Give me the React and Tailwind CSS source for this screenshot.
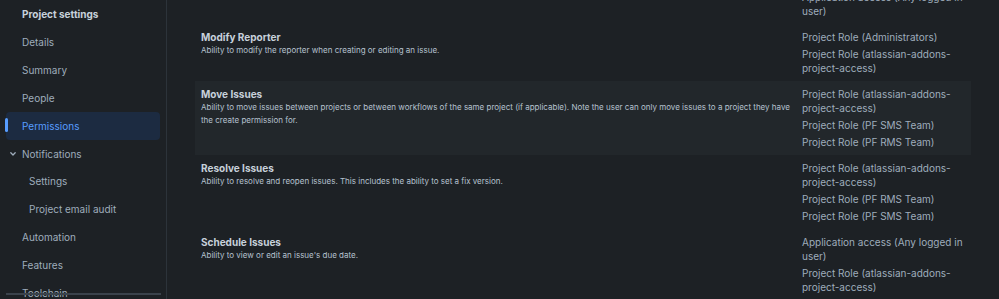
import React from 'react'

const nav = [
  { label: 'Details' },
  { label: 'Summary' },
  { label: 'People' },
  { label: 'Permissions', active: true },
  { label: 'Notifications', chevron: true },
  { label: 'Settings', sub: true },
  { label: 'Project email audit', sub: true },
  { label: 'Automation' },
  { label: 'Features' },
  { label: 'Toolchain' },
]

const rows = [
  {
    title: '',
    desc: '',
    grants: ['Application access (Any logged in user)'],
  },
  {
    title: 'Modify Reporter',
    desc: 'Ability to modify the reporter when creating or editing an issue.',
    grants: ['Project Role (Administrators)', 'Project Role (atlassian-addons-project-access)'],
  },
  {
    title: 'Move Issues',
    desc: 'Ability to move issues between projects or between workflows of the same project (if applicable). Note the user can only move issues to a project they have the create permission for.',
    grants: ['Project Role (atlassian-addons-project-access)', 'Project Role (PF SMS Team)', 'Project Role (PF RMS Team)'],
    hover: true,
  },
  {
    title: 'Resolve Issues',
    desc: 'Ability to resolve and reopen issues. This includes the ability to set a fix version.',
    grants: ['Project Role (atlassian-addons-project-access)', 'Project Role (PF RMS Team)', 'Project Role (PF SMS Team)'],
  },
  {
    title: 'Schedule Issues',
    desc: "Ability to view or edit an issue's due date.",
    grants: ['Application access (Any logged in user)', 'Project Role (atlassian-addons-project-access)'],
  },
]

function Chevron() {
  return (
    <svg width="8" height="8" viewBox="0 0 8 8" className="absolute left-[3px] top-[10px]">
      <path d="M1.8 2.8 L4 5 L6.2 2.8" fill="none" stroke="#9fadbc" strokeWidth="1.3" strokeLinecap="round" strokeLinejoin="round" />
    </svg>
  )
}

function Sidebar() {
  return (
    <aside className="relative w-[167px] h-full shrink-0 bg-[#1d2125] border-r border-[#2c333a] overflow-hidden">
      <div className="h-[29px] flex items-center pl-[22px] text-[10px] font-bold text-[#c7d1db]">
        Project settings
      </div>
      <nav className="flex flex-col">
        {nav.map((item) => (
          <div
            key={item.label}
            className={
              item.active
                ? 'relative mx-[6px] h-[27.8px] flex items-center pl-[16px] rounded-[4px] bg-[#1c2b41] text-[10px] text-[#579dff]'
                : item.sub
                ? 'relative mx-[6px] h-[27.8px] flex items-center pl-[23px] text-[10px] text-[#9fadbc]'
                : 'relative mx-[6px] h-[27.8px] flex items-center pl-[16px] text-[10px] text-[#9fadbc]'
            }
          >
            {item.active && <span className="absolute left-[-1px] top-[6px] w-[3px] h-[14px] rounded-full bg-[#579dff]" />}
            {item.chevron && <Chevron />}
            {item.label}
          </div>
        ))}
      </nav>
      <div className="absolute left-[6px] right-[5px] top-[293px] h-[2px] bg-[#3b434c]" />
    </aside>
  )
}

function Row({ row }) {
  return (
    <div className={row.hover ? 'flex px-[6px] py-[6px] bg-[#22272b]' : 'flex px-[6px] py-[6px]'}>
      <div className="flex-1 pr-[6px]">
        {row.title && <div className="text-[10px] leading-[14px] font-bold text-[#c7d1db]">{row.title}</div>}
        {row.desc && <div className="text-[8px] leading-[13px] text-[#b6c2cf]">{row.desc}</div>}
      </div>
      <div className="w-[163px] shrink-0 flex flex-col gap-[3px]">
        {row.grants.map((g, i) => (
          <div key={i} className="text-[10px] leading-[14px] text-[#9fadbc]">{g}</div>
        ))}
      </div>
    </div>
  )
}

export default function App() {
  return (
    <div
      className="w-[999px] h-[299px] flex bg-[#1d2125] overflow-hidden"
      style={{ fontFamily: 'Inter, "Liberation Sans", sans-serif' }}
    >
      <Sidebar />
      <main className="flex-1 min-w-0 overflow-hidden">
        <div className="mt-[-16px] ml-[28px] mr-[28px] flex flex-col">
          {rows.map((r, i) => (
            <Row key={i} row={r} />
          ))}
        </div>
      </main>
    </div>
  )
}
